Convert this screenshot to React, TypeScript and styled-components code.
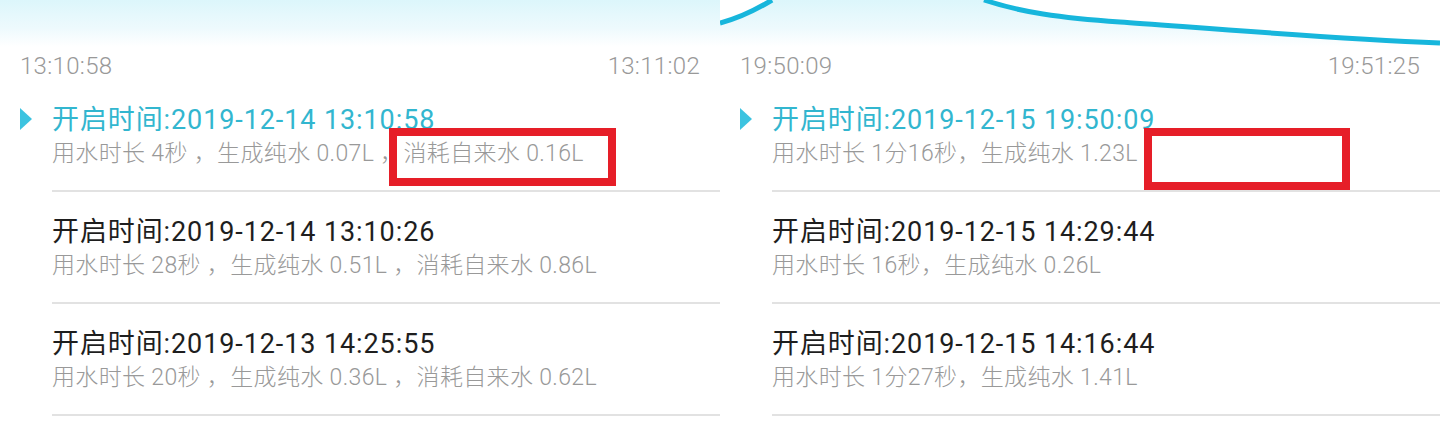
import React from "react";
import styled, { createGlobalStyle } from "styled-components";

const Global = createGlobalStyle`
  html, body { margin: 0; padding: 0; background: #fff; }
  body { font-family: "Roboto", "Noto Sans CJK SC", sans-serif; }
`;

const Page = styled.div`
  display: flex;
  width: 1440px;
  height: 422px;
  overflow: hidden;
  background: #fff;
`;

const Panel = styled.section`
  width: 720px;
  display: flex;
  flex-direction: column;
`;

const ChartSvg = styled.svg`
  display: block;
  width: 720px;
  height: 52px;
`;

const Axis = styled.div`
  display: flex;
  justify-content: space-between;
  padding: 0 20px;
  height: 28px;
  line-height: 28px;
  font-size: 24px;
  letter-spacing: 0.3px;
  font-weight: 300;
  color: #999;
`;

const List = styled.div`
  display: flex;
  flex-direction: column;
`;

const Item = styled.div`
  display: flex;
`;

const MarkerCell = styled.div`
  width: 52px;
  flex: none;
  padding: 28px 0 0 20px;
  box-sizing: border-box;
`;

const Triangle = styled.div`
  width: 0;
  height: 0;
  border-top: 11px solid transparent;
  border-bottom: 11px solid transparent;
  border-left: 12px solid #3cc3e0;
`;

const Body = styled.div`
  position: relative;
  flex: 1;
  padding: 23px 0 21px;
  border-bottom: 2px solid #e2e2e2;
`;

const Title = styled.div<{ $active?: boolean }>`
  font-size: 27px;
  line-height: 34px;
  height: 34px;
  letter-spacing: 0.9px;
  color: ${(p) => (p.$active ? "#32b6cf" : "#1e1e1e")};
  white-space: nowrap;
`;

const Sub = styled.div`
  margin-top: 2px;
  font-size: 23px;
  line-height: 30px;
  height: 30px;
  letter-spacing: 0.35px;
  font-weight: 300;
  color: #999;
  white-space: nowrap;
`;

const Mark = styled.div<{ $left: number; $width: number; $height: number }>`
  position: absolute;
  top: 48px;
  left: ${(p) => p.$left}px;
  width: ${(p) => p.$width}px;
  height: ${(p) => p.$height}px;
  border: 8px solid #e61e28;
  box-sizing: border-box;
`;

type Rec = { title: string; sub: string };

type PanelData = {
  id: string;
  start: string;
  end: string;
  curve: boolean;
  rows: Rec[];
  mark: { left: number; width: number; height: number };
};

const panels: PanelData[] = [
  {
    id: "a",
    start: "13:10:58",
    end: "13:11:02",
    curve: false,
    rows: [
      { title: "开启时间:2019-12-14 13:10:58", sub: "用水时长 4秒 ，生成纯水 0.07L ，消耗自来水 0.16L" },
      { title: "开启时间:2019-12-14 13:10:26", sub: "用水时长 28秒 ，生成纯水 0.51L ，消耗自来水 0.86L" },
      { title: "开启时间:2019-12-13 14:25:55", sub: "用水时长 20秒 ，生成纯水 0.36L ，消耗自来水 0.62L" },
    ],
    mark: { left: 337, width: 227, height: 58 },
  },
  {
    id: "b",
    start: "19:50:09",
    end: "19:51:25",
    curve: true,
    rows: [
      { title: "开启时间:2019-12-15 19:50:09", sub: "用水时长 1分16秒，生成纯水 1.23L" },
      { title: "开启时间:2019-12-15 14:29:44", sub: "用水时长 16秒，生成纯水 0.26L" },
      { title: "开启时间:2019-12-15 14:16:44", sub: "用水时长 1分27秒，生成纯水 1.41L" },
    ],
    mark: { left: 372, width: 206, height: 62 },
  },
];

function Chart({ id, curve }: { id: string; curve: boolean }) {
  const gid = `g-${id}`;
  return (
    <ChartSvg viewBox="0 0 720 52" preserveAspectRatio="none">
      <defs>
        <linearGradient id={gid} x1="0" y1="0" x2="0" y2="1">
          <stop offset="0" stopColor="#dcf6fb" />
          <stop offset="0.55" stopColor="#eefafd" />
          <stop offset="0.9" stopColor="#ffffff" />
        </linearGradient>
      </defs>
      {curve ? (
        <>
          <path
            d="M0,23 C16,19 34,11 52,0 L264,0 C300,12 340,18 400,22 S600,38 720,43 L720,52 L0,52 Z"
            fill={`url(#${gid})`}
          />
          <path d="M0,23 C16,19 34,11 52,0" fill="none" stroke="#17b6dc" strokeWidth="5" />
          <path d="M264,0 C300,12 340,18 400,22 S600,38 720,43" fill="none" stroke="#17b6dc" strokeWidth="5" />
        </>
      ) : (
        <rect x="0" y="0" width="720" height="52" fill={`url(#${gid})`} />
      )}
    </ChartSvg>
  );
}

export default function App() {
  return (
    <Page>
      <Global />
      {panels.map((p) => (
        <Panel key={p.id}>
          <Chart id={p.id} curve={p.curve} />
          <Axis>
            <span>{p.start}</span>
            <span>{p.end}</span>
          </Axis>
          <List>
            {p.rows.map((r, i) => (
              <Item key={i}>
                <MarkerCell>{i === 0 && <Triangle />}</MarkerCell>
                <Body>
                  <Title $active={i === 0}>{r.title}</Title>
                  <Sub>{r.sub}</Sub>
                  {i === 0 && <Mark $left={p.mark.left} $width={p.mark.width} $height={p.mark.height} />}
                </Body>
              </Item>
            ))}
          </List>
        </Panel>
      ))}
    </Page>
  );
}
